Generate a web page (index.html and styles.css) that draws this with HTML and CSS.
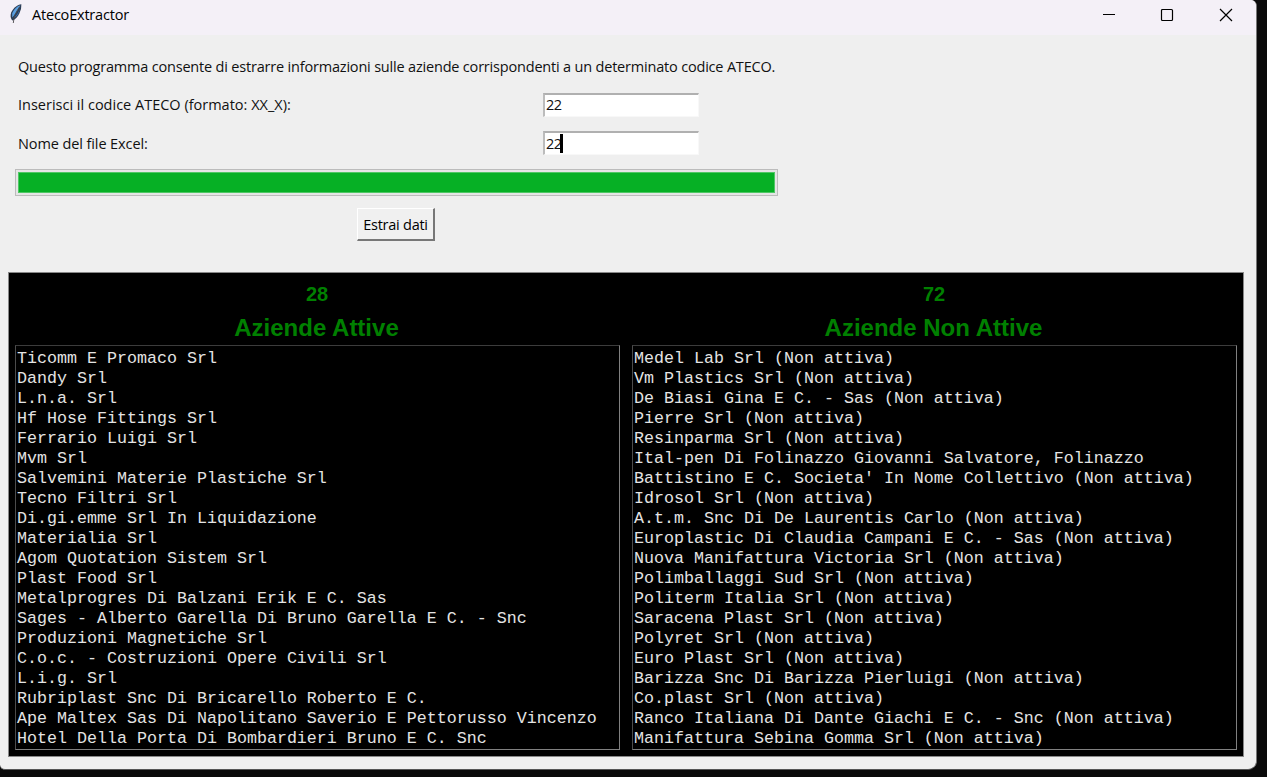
FILE: index.html
```
<!DOCTYPE html>
<html lang="it">
<head>
<meta charset="utf-8">
<title>AtecoExtractor</title>
<link rel="stylesheet" href="styles.css">
</head>
<body>
<div class="window">
  <header class="titlebar">
    <svg class="feather" width="14" height="20" viewBox="0 0 14 20">
      <path d="M12.400 .3C8.500 .8 4.500 3.500 2.200 8.500C1.200 11.500 1.300 14 3.200 16.500C6.500 15.500 9 12.500 10.300 9.500L12 5Z" fill="#2c3d55"/>
      <path d="M11.400 1.200C8 2 4.600 5.500 3.200 9.500L3.200 13.500C5.500 11 8 7 11.400 1.200Z" fill="#5a9fe0"/>
      <path d="M11.500 2.500C10.500 7 8 11 4.500 14.500C7 13 9 11 9.800 8.500Z" fill="#3570b5"/>
      <path d="M10.500 3C7 8 4.800 12 4.300 19" fill="none" stroke="#4a4a4c" stroke-width=".9"/>
    </svg>
    <span class="title">AtecoExtractor</span>
    <svg class="controls" width="132" height="15" viewBox="0 0 132 15" fill="none" stroke="#000">
      <path d="M1 7.500H13"/>
      <rect x="59.500" y="2.500" width="11" height="11" rx="1" stroke-width="1.200"/>
      <path d="M118 2L130 14M130 2L118 14" stroke-width="1.200"/>
    </svg>
  </header>
  <main class="content">
    <section class="form">
      <p class="label intro">Questo programma consente di estrarre informazioni sulle aziende corrispondenti a un determinato codice ATECO.</p>
      <div class="row"><span class="label ateco">Inserisci il codice ATECO (formato: XX_X):</span><div class="entry">22</div></div>
      <div class="row"><span class="label file">Nome del file Excel:</span><div class="entry">22<i class="caret"></i></div></div>
      <div class="progress"><div class="bar"></div></div>
      <button class="button">Estrai dati</button>
    </section>
    <section class="results">
      <div class="column">
        <div class="count">28</div>
        <h2 class="heading">Aziende Attive</h2>
        <pre class="list">Ticomm E Promaco Srl
Dandy Srl
L.n.a. Srl
Hf Hose Fittings Srl
Ferrario Luigi Srl
Mvm Srl
Salvemini Materie Plastiche Srl
Tecno Filtri Srl
Di.gi.emme Srl In Liquidazione
Materialia Srl
Agom Quotation Sistem Srl
Plast Food Srl
Metalprogres Di Balzani Erik E C. Sas
Sages - Alberto Garella Di Bruno Garella E C. - Snc
Produzioni Magnetiche Srl
C.o.c. - Costruzioni Opere Civili Srl
L.i.g. Srl
Rubriplast Snc Di Bricarello Roberto E C.
Ape Maltex Sas Di Napolitano Saverio E Pettorusso Vincenzo
Hotel Della Porta Di Bombardieri Bruno E C. Snc</pre>
      </div>
      <div class="column">
        <div class="count">72</div>
        <h2 class="heading">Aziende Non Attive</h2>
        <pre class="list">Medel Lab Srl (Non attiva)
Vm Plastics Srl (Non attiva)
De Biasi Gina E C. - Sas (Non attiva)
Pierre Srl (Non attiva)
Resinparma Srl (Non attiva)
Ital-pen Di Folinazzo Giovanni Salvatore, Folinazzo
Battistino E C. Societa' In Nome Collettivo (Non attiva)
Idrosol Srl (Non attiva)
A.t.m. Snc Di De Laurentis Carlo (Non attiva)
Europlastic Di Claudia Campani E C. - Sas (Non attiva)
Nuova Manifattura Victoria Srl (Non attiva)
Polimballaggi Sud Srl (Non attiva)
Politerm Italia Srl (Non attiva)
Saracena Plast Srl (Non attiva)
Polyret Srl (Non attiva)
Euro Plast Srl (Non attiva)
Barizza Snc Di Barizza Pierluigi (Non attiva)
Co.plast Srl (Non attiva)
Ranco Italiana Di Dante Giachi E C. - Snc (Non attiva)
Manifattura Sebina Gomma Srl (Non attiva)</pre>
      </div>
    </section>
  </main>
</div>
</body>
</html>
```
FILE: styles.css
```
* { box-sizing: border-box; }
body {
  margin: 0;
  height: 777px;
  overflow: hidden;
  background: #0a0a0a;
  font-family: "Open Sans", "Noto Sans", sans-serif;
  color: #111;
}
.window {
  width: 1257px;
  height: 770px;
  background: #efefef;
  border-right: 1px solid #777;
  border-bottom: 1px solid #555;
  border-radius: 0 6px 9px 5px;
  overflow: hidden;
}
.titlebar {
  display: flex;
  align-items: flex-start;
  height: 35px;
  padding: 4px 22px 0 9px;
  background: #f4f0f7;
}
.feather { flex: none; }
.title {
  margin: 0 auto 0 9px;
  font-size: 14.5px;
  line-height: 22px;
  letter-spacing: -0.2px;
  color: #000;
}
.controls { margin-top: 3px; }
.content { padding: 19px 12px 0 8px; }
.form { width: 771px; padding-left: 7px; }
.label, .entry, .button {
  font-size: 14.5px;
  line-height: 26px;
  letter-spacing: -0.1px;
  white-space: nowrap;
}
.label { padding-left: 3px; }
.intro { margin: 0 0 13px; letter-spacing: -0.19px; }
.row {
  display: grid;
  grid-template-columns: 528px 156px;
  height: 24px;
  margin-bottom: 15px;
}
.row .label { line-height: 23px; }
.row .ateco { letter-spacing: 0; }
.entry {
  display: flex;
  padding-left: 1px;
  line-height: 20px;
  letter-spacing: -0.5px;
  background: #fff;
  border: solid;
  border-width: 2px 1px 1px 2px;
  border-color: #b0b0b0 #f8f8f8 #f8f8f8 #bcbcbc;
}
.row + .row .entry { height: 24px; margin-top: -1px; line-height: 21px; }
.caret { width: 3px; height: 19px; margin: 1px 0 0 -2px; background: #000; }
.progress {
  height: 27px;
  width: 763px;
  margin-top: -2px;
  padding: 2px;
  border: 1px solid #bcbcbc;
  background: #e5e5e5;
}
.bar { height: 21px; background: #06b025; border: 1px solid #4fc765; }
.button {
  display: block;
  width: 78px;
  height: 33px;
  margin: 12px 0 0 342px;
  padding: 1px 0 0;
  font-family: inherit;
  letter-spacing: -0.25px;
  color: #000;
  background: #f0f0f0;
  border: solid;
  border-width: 1px 2px 2px 1px;
  border-color: #fff #777 #777 #fff;
}
.results {
  display: grid;
  grid-template-columns: 605px 605px;
  column-gap: 12px;
  width: 1236px;
  height: 485px;
  margin-top: 31px;
  padding: 5px 6px 0;
  background: #000;
  border: 1px solid #888;
}
.column { text-align: center; }
.count, .heading {
  margin: 0;
  padding-right: 2px;
  font-family: "Liberation Sans", Arial, sans-serif;
  font-weight: bold;
  color: #008000;
}
.count { font-size: 20px; line-height: 32px; padding-right: 1px; }
.heading { height: 35px; font-size: 24px; line-height: 35px; }
.list {
  height: 405px;
  margin: 0;
  padding: 3px 0 0 1px;
  text-align: left;
  font: 16.667px/20px "Liberation Mono", "Courier New", monospace;
  color: #e4e4e4;
  border: 1px solid;
  border-color: #3c3c3c #808080 #808080 #4c4c4c;
}
```
